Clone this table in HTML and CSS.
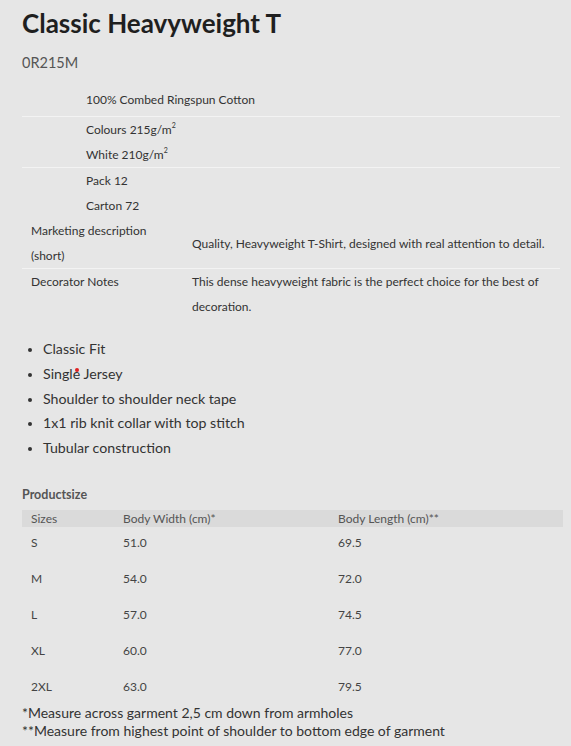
FILE: index.html
```html
<!DOCTYPE html>
<html>
<head>
<meta charset="utf-8">
<link rel="stylesheet" href="styles.css">
</head>
<body>
<main class="page">
  <h1 class="title">Classic Heavyweight T</h1>
  <div class="code">0R215M</div>

  <div class="specs">
    <div class="group group-first">
      <div class="indent">100% Combed Ringspun Cotton</div>
    </div>
    <div class="group">
      <div class="indent">Colours 215g/m<sup>2</sup></div>
      <div class="indent">White 210g/m<sup>2</sup></div>
    </div>
    <div class="group">
      <div class="indent">Pack 12</div>
      <div class="indent">Carton 72</div>
      <div class="pair">
        <div class="label">Marketing description<br>(short)</div>
        <div class="value center">Quality, Heavyweight T-Shirt, designed with real attention to detail.</div>
      </div>
    </div>
    <div class="group last">
      <div class="pair">
        <div class="label">Decorator Notes</div>
        <div class="value">This dense heavyweight fabric is the perfect choice for the best of decoration.</div>
      </div>
    </div>
  </div>

  <ul class="features">
    <li>Classic Fit</li>
    <li>Singl<span class="mark">e<span class="dot"></span></span> Jersey</li>
    <li>Shoulder to shoulder neck tape</li>
    <li>1x1 rib knit collar with top stitch</li>
    <li>Tubular construction</li>
  </ul>

  <h2 class="size-title">Productsize</h2>
  <div class="sizes">
    <div class="srow head"><span>Sizes</span><span>Body Width (cm)*</span><span>Body Length (cm)**</span></div>
    <div class="srow"><span>S</span><span>51.0</span><span>69.5</span></div>
    <div class="srow"><span>M</span><span>54.0</span><span>72.0</span></div>
    <div class="srow"><span>L</span><span>57.0</span><span>74.5</span></div>
    <div class="srow"><span>XL</span><span>60.0</span><span>77.0</span></div>
    <div class="srow"><span>2XL</span><span>63.0</span><span>79.5</span></div>
  </div>
  <div class="notes">
    <div>*Measure across garment 2,5 cm down from armholes</div>
    <div>**Measure from highest point of shoulder to bottom edge of garment</div>
  </div>
</main>
</body>
</html>
```
FILE: styles.css
```css
html, body {
  margin: 0;
  padding: 0;
  background: #e6e6e6;
}
body {
  font-family: Lato, "Open Sans", sans-serif;
  color: #333;
}
.page {
  padding: 6px 8px 0 22px;
}
.title {
  margin: 0;
  font-size: 26px;
  font-weight: 700;
  color: #1f1f1f;
  line-height: 34px;
}
.code {
  margin-top: 11px;
  font-size: 14.5px;
  color: #555;
  line-height: 24px;
}
.specs {
  margin-top: 12px;
  width: 538px;
  font-size: 12px;
  line-height: 25px;
  color: #333;
}
.group {
  border-bottom: 1px solid #f3f3f3;
}
.group-first {
  padding-bottom: 4px;
}
.group.last {
  border-bottom: none;
}
.indent {
  padding-left: 64px;
}
sup {
  font-size: 7px;
  line-height: 0;
  vertical-align: 6px;
}
.pair {
  display: flex;
}
.label {
  width: 161px;
  padding-left: 9px;
  flex: none;
}
.value {
  flex: 1;
}
.value.center {
  align-self: center;
}
.features {
  margin: 18px 0 0;
  padding-left: 21px;
  font-size: 14.2px;
  line-height: 24.8px;
  color: #333;
}
.features li::marker {
  font-size: 12px;
}
.mark {
  position: relative;
  display: inline-block;
}
.dot {
  position: absolute;
  left: 2px;
  top: 6px;
  width: 4px;
  height: 4px;
  border-radius: 50%;
  background: #e02020;
}
.size-title {
  margin: 25px 0 0;
  font-size: 12.5px;
  font-weight: 700;
  color: #555;
  line-height: 18px;
}
.sizes {
  margin-top: 6px;
  width: 541px;
  font-size: 12px;
  color: #444;
}
.srow {
  display: grid;
  grid-template-columns: 92px 215px 1fr;
  padding-left: 9px;
  align-items: center;
  box-sizing: border-box;
}
.srow.head {
  height: 17px;
  background: #dadada;
  color: #555;
}
.srow:not(.head) {
  height: 36px;
  padding-bottom: 4px;
}
.notes {
  margin-top: -3px;
  font-size: 14px;
  line-height: 18px;
  color: #333;
}
```
